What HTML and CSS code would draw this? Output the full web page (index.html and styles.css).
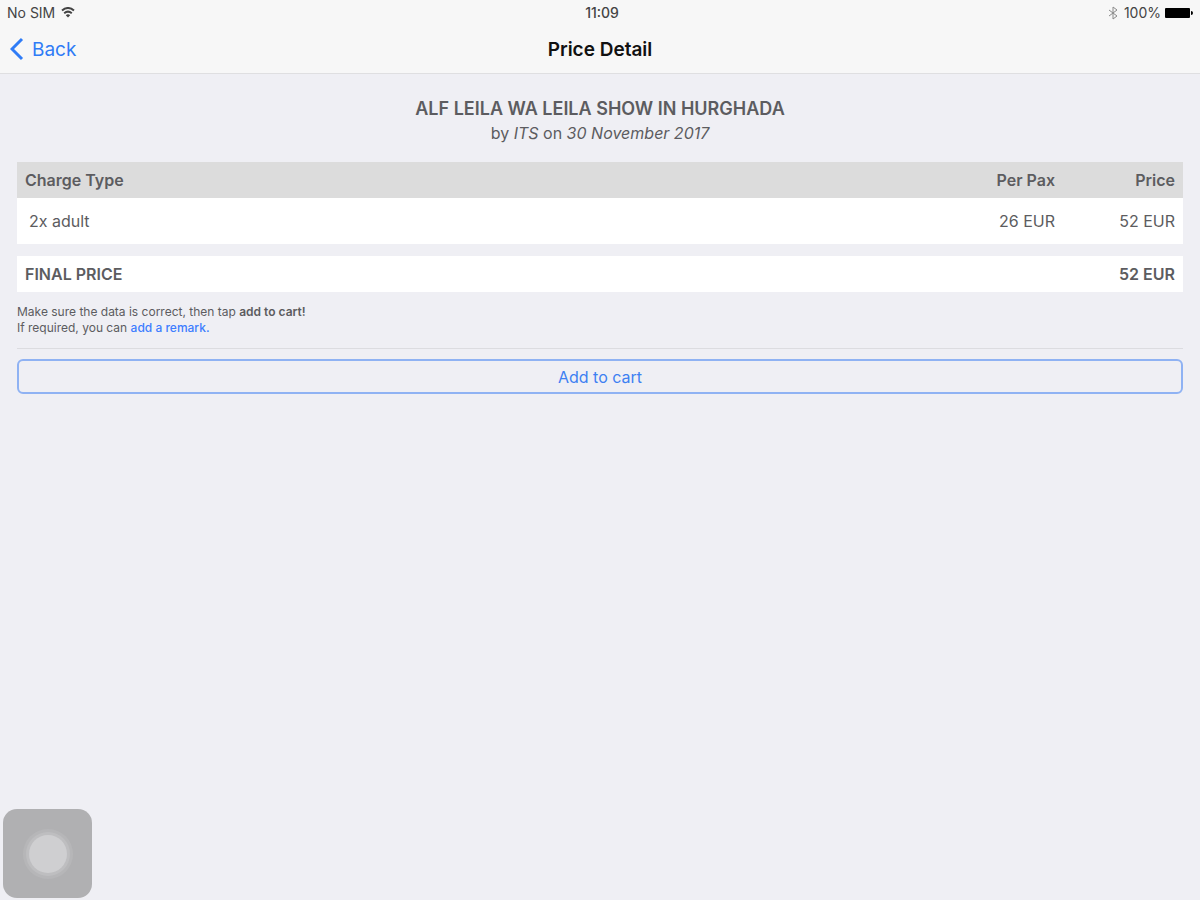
FILE: index.html
```
<!DOCTYPE html>
<html lang="en">

<head>
  <meta charset="UTF-8">
  <meta name="viewport" content="width=device-width, initial-scale=1.0">
  <title>Price Detail</title>
  <link rel="stylesheet" href="styles.css">
</head>

<body>
  <header class="header">
    <div class="status-bar">
      <div class="status-left">
        <span>No SIM</span>
        <svg class="wifi" viewBox="0 0 14 11" aria-hidden="true">
          <path d="M1 3.6 Q7 -1.6 13 3.6" />
          <path d="M3.2 6.2 Q7 3 10.8 6.2" />
          <path class="wifi-dot" d="M4.8 8.2 Q7 6.2 9.2 8.2 L7 10.6 Z" />
        </svg>
      </div>
      <div class="status-time">11:09</div>
      <div class="status-right">
        <svg class="bluetooth" viewBox="0 0 10 14" aria-hidden="true">
          <path d="M1 4 L9 10 L5 13 L5 1 L9 4 L1 10" />
        </svg>
        <span>100%</span>
        <svg class="battery" viewBox="0 0 28 12" aria-hidden="true">
          <rect x="0" y="1" width="25" height="10" rx="1" />
          <path d="M26 4 Q28 4 28 6 Q28 8 26 8 Z" />
        </svg>
      </div>
    </div>
    <nav class="nav-bar">
      <button type="button" class="back-button">
        <svg class="chevron" viewBox="0 0 14 24" aria-hidden="true">
          <path d="M12 2 L2 12 L12 22" />
        </svg>
        Back
      </button>
      <h1 class="nav-title">Price Detail</h1>
    </nav>
  </header>

  <main class="content">
    <h2 class="excursion-title">ALF LEILA WA LEILA SHOW IN HURGHADA</h2>
    <p class="excursion-info">by <em>ITS</em> on <em>30 November 2017</em></p>

    <table class="price-table">
      <thead>
        <tr>
          <th>Charge Type</th>
          <th class="amount">Per Pax</th>
          <th class="amount">Price</th>
        </tr>
      </thead>
      <tbody>
        <tr>
          <td>2x adult</td>
          <td class="amount">26 EUR</td>
          <td class="amount">52 EUR</td>
        </tr>
      </tbody>
    </table>

    <div class="final-price">
      <span>FINAL PRICE</span>
      <span>52 EUR</span>
    </div>

    <p class="note">
      Make sure the data is correct, then tap <strong>add to cart!</strong><br>
      If required, you can <a href="#remark">add a remark.</a>
    </p>

    <button type="button" class="cart-button">Add to cart</button>
  </main>

  <button type="button" class="assistive-touch" aria-label="Assistive touch">
    <span class="assistive-dot"></span>
  </button>
</body>

</html>
```

FILE: styles.css
```
* {
  box-sizing: border-box;
}

body {
  margin: 0;
  min-height: 100vh;
  font-family: Inter, "Liberation Sans", sans-serif;
  font-size: 16px;
  color: #5c5c60;
  background-color: #efeff4;
}

h1,
h2,
p {
  margin: 0;
}

button {
  font-family: inherit;
  cursor: pointer;
}

.header {
  background-color: #f7f7f7;
  border-bottom: 1px solid #dfdfe1;
}

/* status bar */
.status-bar {
  display: grid;
  grid-template-columns: 1fr auto 1fr;
  align-items: center;
  height: 25px;
  padding: 0 7px;
  font-size: 14px;
  color: #444;
}

.status-left,
.status-right {
  display: flex;
  align-items: center;
  gap: 6px;
}

.status-right {
  justify-content: flex-end;
  gap: 4px;
}

.status-time {
  font-weight: 500;
  padding-left: 4px;
}

.wifi {
  width: 14px;
  height: 11px;
  fill: none;
  stroke: #444;
  stroke-width: 2;
}

.wifi .wifi-dot {
  fill: #444;
  stroke: none;
}

.bluetooth {
  width: 10px;
  height: 14px;
  margin-right: 2px;
  fill: none;
  stroke: #8a8a8a;
}

.battery {
  width: 28px;
  height: 12px;
  fill: #000;
}

/* navigation bar */
.nav-bar {
  display: grid;
  grid-template-columns: 1fr auto 1fr;
  align-items: center;
  height: 48px;
  padding: 0 10px;
}

.back-button {
  display: flex;
  align-items: center;
  justify-self: start;
  gap: 8px;
  padding: 0;
  font-size: 19px;
  color: #2f7cf6;
  background: none;
  border: none;
}

.chevron {
  width: 14px;
  height: 24px;
  fill: none;
  stroke: #2f7cf6;
  stroke-width: 3;
}

.nav-title {
  font-size: 19px;
  font-weight: 600;
  color: #111;
}

/* page content */
.content {
  padding: 23px 17px;
}

.excursion-title {
  font-size: 18px;
  font-weight: 600;
  line-height: 24px;
  text-align: center;
}

.excursion-info {
  margin-bottom: 16px;
  line-height: 25px;
  text-align: center;
}

.price-table {
  width: 100%;
  border-collapse: collapse;
}

.price-table th {
  height: 36px;
  padding: 0 8px;
  font-weight: 600;
  text-align: left;
  background-color: #dcdcdc;
}

.price-table td {
  height: 46px;
  padding: 0 8px 0 12px;
  background-color: #fff;
}

.price-table .amount {
  width: 120px;
  padding-right: 8px;
  text-align: right;
}

.final-price {
  display: flex;
  align-items: center;
  justify-content: space-between;
  height: 36px;
  margin-top: 12px;
  padding: 0 8px;
  font-weight: 600;
  background-color: #fff;
}

.note {
  padding: 12px 0;
  font-size: 12px;
  line-height: 16px;
  border-bottom: 1px solid #dcdce0;
}

.note strong {
  font-weight: 600;
}

.note a {
  font-weight: 500;
  color: #3d7dff;
  text-decoration: none;
}

.cart-button {
  width: 100%;
  height: 35px;
  margin-top: 10px;
  font-size: 16px;
  color: #3d80f2;
  background-color: transparent;
  border: 2px solid #8fb2f3;
  border-radius: 6px;
}

/* floating button over the page */
.assistive-touch {
  position: fixed;
  left: 3px;
  bottom: 2px;
  display: flex;
  align-items: center;
  justify-content: center;
  width: 89px;
  height: 89px;
  padding: 0;
  background-color: #b0b0b2;
  border: none;
  border-radius: 14px;
}

.assistive-dot {
  width: 38px;
  height: 38px;
  background-color: #cfcfd1;
  border-radius: 50%;
  box-shadow: 0 0 0 3px #bebec0, 0 0 0 6px #b6b6b8;
}
```
